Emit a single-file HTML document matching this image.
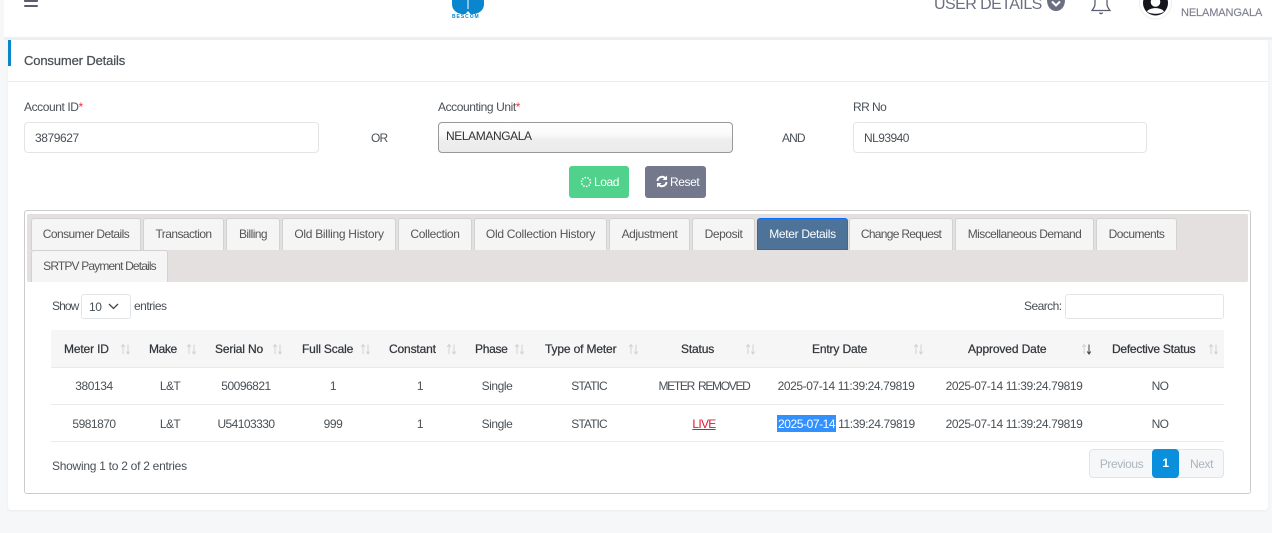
<!DOCTYPE html>
<html><head><meta charset="utf-8"><title>Consumer Details</title>
<style>
html,body{margin:0;padding:0;width:1272px;height:533px;overflow:hidden;background:#f5f7f9;font-family:"Liberation Sans",sans-serif;font-size:12px;color:#495057;letter-spacing:-.42px}
div,span.a,a{position:absolute;box-sizing:border-box;white-space:nowrap}
.t{line-height:16px;height:16px}
.c{text-align:center}
.inp{background:#fff;border:1px solid #e2e5e8;border-radius:4px;height:31px;line-height:30px;padding-left:10px}
.tab{top:218px;height:32px;line-height:31px;text-align:center;background:#f5f5f5;border:1px solid #d2d2d2;border-bottom:0;border-radius:3px 3px 0 0;color:#555;letter-spacing:-.56px}
.th{top:341px;color:#33373d;-webkit-text-stroke:.25px #33373d;letter-spacing:-.15px}
.so{top:342px;width:11px;height:14px}
.r1{top:378px}.r2{top:416px}
</style></head><body>
<div style="left:4px;top:0;width:1268px;height:37px;background:#fff"></div>
<div style="left:4px;top:37px;width:1268px;height:3px;background:#eeeff3"></div>
<div style="left:24px;top:-1px;width:14px;height:3px;background:#5b5e70;border-radius:1px"></div>
<div style="left:24px;top:5px;width:14px;height:2px;background:#5b5e70;border-radius:1px"></div>
<svg style="position:absolute;left:452px;top:0" width="32" height="14" viewBox="0 0 32 14"><path d="M0 0H32V4C32 10 27 14 21 14H11C5 14 0 10 0 4Z" fill="#0a86cf"/><path d="M15.500 0h1v9h-1z" fill="#fff"/><path d="M13.500 14L16 11 18.500 14Z" fill="#fff"/></svg>
<div style="left:452px;top:14px;width:30px;height:6px;line-height:6px;font-size:5px;font-weight:700;color:#0a86cf;letter-spacing:.95px">BESCOM</div>
<div class="t" style="left:934px;top:-4px;height:18px;line-height:18px;font-size:16px;color:#6c6f80;letter-spacing:-.55px">USER DETAILS</div>
<svg style="position:absolute;left:1046px;top:0" width="20" height="11" viewBox="0 0 20 11"><path d="M10 11C15 11 19 7 19 0H1C1 7 5 11 10 11Z" fill="#6c6f80"/><path d="M6 1.500l4 4 4-4" fill="none" stroke="#fff" stroke-width="2"/></svg>
<svg style="position:absolute;left:1090px;top:0" width="22" height="15" viewBox="0 0 22 15"><path d="M5 0V4C5 7 3 9 2 10.500H20C19 9 17 7 17 4V0" fill="none" stroke="#5b5e70" stroke-width="1.300"/><path d="M9.500 12.500C10 14 12 14 12.500 12.500" fill="none" stroke="#5b5e70" stroke-width="1.300"/></svg>
<svg style="position:absolute;left:1138px;top:0" width="36" height="20" viewBox="0 0 36 20"><circle cx="17.500" cy="3" r="16" fill="#fff" stroke="#eee"/><circle cx="17.500" cy="3" r="12.500" fill="#15151c"/><circle cx="17.500" cy="2" r="4.800" fill="#fff"/><path d="M9 11.500C11.500 7 23.500 7 26 11.500C22.500 14.500 12.500 14.500 9 11.500Z" fill="#fff"/></svg>
<div class="t" style="left:1181px;top:5px;font-size:11px;color:#7f8190;letter-spacing:-.12px;-webkit-text-stroke:.15px #7f8190">NELAMANGALA</div>

<div style="left:8px;top:40px;width:1260px;height:470px;background:#fff;border-radius:3px;box-shadow:0 1px 2px rgba(0,0,0,.05)"></div>
<div style="left:8px;top:40px;width:3px;height:26px;background:#0a85c9"></div>
<div style="left:8px;top:81px;width:1260px;height:1px;background:#e9ecef"></div>
<div class="t" style="left:24px;top:53px;font-size:13px;color:#495057;-webkit-text-stroke:.25px #495057;letter-spacing:-.14px">Consumer Details</div>

<div class="t" style="left:24px;top:99px">Account ID<span style="color:#e33">*</span></div>
<div class="t" style="left:438px;top:99px">Accounting Unit<span style="color:#e33">*</span></div>
<div class="t" style="left:853px;top:99px;letter-spacing:-.55px">RR No</div>
<div class="inp" style="left:24px;top:122px;width:295px">3879627</div>
<div class="t" style="left:371px;top:130px;letter-spacing:-.8px">OR</div>
<div style="left:438px;top:122px;width:295px;height:31px;border:1px solid #999;border-radius:4px;line-height:26px;padding-left:7px;background:linear-gradient(#fff 0,#fafafa 40%,#eee 58%,#ebebeb 100%);color:#333;letter-spacing:-.4px">NELAMANGALA</div>
<div class="t" style="left:782px;top:130px;letter-spacing:-.9px">AND</div>
<div class="inp" style="left:853px;top:122px;width:294px;letter-spacing:-.55px">NL93940</div>

<div style="left:569px;top:166px;width:60px;height:32px;background:#51d28c;border-radius:3px"></div>
<svg style="position:absolute;left:580px;top:176px" width="12" height="12" viewBox="0 0 12 12"><circle cx="6" cy="6" r="4.500" fill="none" stroke="#fff" stroke-width="1.500" stroke-dasharray="1.500 1.300"/></svg>
<div class="t" style="left:594px;top:174px;color:#fff">Load</div>
<div style="left:645px;top:166px;width:61px;height:32px;background:#74788d;border-radius:3px"></div>
<svg style="position:absolute;left:656px;top:175px" width="12" height="13" viewBox="0 0 12 13"><path d="M1.500 6A4.500 4.500 0 0 1 9.500 3.500M10.500 7A4.500 4.500 0 0 1 2.500 9.500" fill="none" stroke="#fff" stroke-width="2"/><path d="M11 .5V5H6.500ZM1 12.500V8H5.500Z" fill="#fff"/></svg>
<div class="t" style="left:670px;top:174px;color:#fff">Reset</div>

<div style="left:24px;top:210px;width:1227px;height:284px;border:1px solid #ccc;border-radius:3px"></div>
<div style="left:27px;top:214px;width:1221px;height:68px;background:#e3e0df;border-radius:2px"></div>
<div class="tab" style="left:31px;width:110px">Consumer Details</div>
<div class="tab" style="left:143px;width:81px">Transaction</div>
<div class="tab" style="left:226px;width:54px">Billing</div>
<div class="tab" style="left:282px;width:114px;letter-spacing:-.28px">Old Billing History</div>
<div class="tab" style="left:398px;width:74px;letter-spacing:-.35px">Collection</div>
<div class="tab" style="left:474px;width:133px;letter-spacing:-.28px">Old Collection History</div>
<div class="tab" style="left:609px;width:81px;letter-spacing:-.42px">Adjustment</div>
<div class="tab" style="left:692px;width:63px;letter-spacing:-.42px">Deposit</div>
<div class="tab" style="left:757px;width:91px;background:#4d7399;border:1px solid #0d6efd;color:#fff;letter-spacing:-.32px">Meter Details</div>
<div class="tab" style="left:849px;width:104px;letter-spacing:-.7px">Change Request</div>
<div class="tab" style="left:955px;width:139px">Miscellaneous Demand</div>
<div class="tab" style="left:1096px;width:81px">Documents</div>
<div class="tab" style="left:31px;top:250px;width:137px;letter-spacing:-.85px">SRTPV Payment Details</div>

<div class="t" style="left:52px;top:298px;letter-spacing:-.9px">Show</div>
<div style="left:81px;top:294px;width:50px;height:25px;border:1px solid #e2e5e8;border-radius:3px;line-height:24px;padding-left:7px">10</div>
<svg style="position:absolute;left:108px;top:303px" width="11" height="7" viewBox="0 0 11 7"><path d="M1 1l4.500 4.500L10 1" fill="none" stroke="#444" stroke-width="1.300"/></svg>
<div class="t" style="left:134px;top:298px;letter-spacing:-.5px">entries</div>
<div class="t" style="left:1024px;top:298px;letter-spacing:-.55px">Search:</div>
<div style="left:1065px;top:294px;width:159px;height:25px;border:1px solid #e2e5e8;border-radius:3px"></div>

<div style="left:51px;top:330px;width:1173px;height:38px;background:#f6f6f6;border-bottom:1px solid #e9e9e9"></div>
<div class="t th" style="left:64px">Meter ID</div>
<div class="t th" style="left:149px;letter-spacing:-.4px">Make</div>
<div class="t th" style="left:215px">Serial No</div>
<div class="t th" style="left:302px">Full Scale</div>
<div class="t th" style="left:389px">Constant</div>
<div class="t th" style="left:475px;letter-spacing:-.3px">Phase</div>
<div class="t th" style="left:545px">Type of Meter</div>
<div class="t th" style="left:681px">Status</div>
<div class="t th" style="left:812px">Entry Date</div>
<div class="t th" style="left:968px;letter-spacing:-.12px">Approved Date</div>
<div class="t th" style="left:1112px;letter-spacing:-.25px">Defective Status</div>

<svg width="0" height="0" style="position:absolute"><defs><g id="s"><path d="M3 12V3M1.200 5L3 2.500 4.800 5" fill="none" stroke="#cfd3d8" stroke-width="1"/><path d="M8 2.500V11.500M6.200 9.500L8 12 9.800 9.500" fill="none" stroke="#cfd3d8" stroke-width="1"/></g></defs></svg>
<svg class="so" style="position:absolute;left:120px"><use href="#s"/></svg>
<svg class="so" style="position:absolute;left:186px"><use href="#s"/></svg>
<svg class="so" style="position:absolute;left:272px"><use href="#s"/></svg>
<svg class="so" style="position:absolute;left:360px"><use href="#s"/></svg>
<svg class="so" style="position:absolute;left:446px"><use href="#s"/></svg>
<svg class="so" style="position:absolute;left:514px"><use href="#s"/></svg>
<svg class="so" style="position:absolute;left:628px"><use href="#s"/></svg>
<svg class="so" style="position:absolute;left:745px"><use href="#s"/></svg>
<svg class="so" style="position:absolute;left:913px"><use href="#s"/></svg>
<svg class="so" style="position:absolute;left:1081px"><use href="#s"/><path d="M8 2.500V11.500M6.200 9.500L8 12 9.800 9.500" fill="none" stroke="#444" stroke-width="1"/></svg>
<svg class="so" style="position:absolute;left:1208px"><use href="#s"/></svg>

<div class="t c r1" style="left:54px;width:80px">380134</div>
<div class="t c r1" style="left:140px;width:60px;letter-spacing:-.6px">L&amp;T</div>
<div class="t c r1" style="left:206px;width:80px;letter-spacing:-.5px">50096821</div>
<div class="t c r1" style="left:303px;width:60px">1</div>
<div class="t c r1" style="left:390px;width:60px">1</div>
<div class="t c r1" style="left:467px;width:60px">Single</div>
<div class="t c r1" style="left:559px;width:60px;letter-spacing:-.9px">STATIC</div>
<div class="t c r1" style="left:644px;width:120px;letter-spacing:-1.3px;word-spacing:2px">METER REMOVED</div>
<div class="t c r1" style="left:766px;width:160px">2025-07-14 11:39:24.79819</div>
<div class="t c r1" style="left:934px;width:160px">2025-07-14 11:39:24.79819</div>
<div class="t c r1" style="left:1130px;width:60px;letter-spacing:-.6px">NO</div>
<div style="left:51px;top:404px;width:1173px;height:1px;background:#e9ecef"></div>

<div class="t c r2" style="left:54px;width:80px;letter-spacing:-.5px">5981870</div>
<div class="t c r2" style="left:140px;width:60px;letter-spacing:-.6px">L&amp;T</div>
<div class="t c r2" style="left:206px;width:80px;letter-spacing:-.55px">U54103330</div>
<div class="t c r2" style="left:303px;width:60px">999</div>
<div class="t c r2" style="left:390px;width:60px">1</div>
<div class="t c r2" style="left:467px;width:60px">Single</div>
<div class="t c r2" style="left:559px;width:60px;letter-spacing:-.9px">STATIC</div>
<div class="t c r2" style="left:674px;width:60px;color:#e8112d;text-decoration:underline;letter-spacing:-.7px">LIVE</div>
<div style="left:777px;top:415px;width:59px;height:17px;background:#3390ff"></div>
<div class="t r2" style="left:778px"><span style="color:#fff">2025-07-14</span> 11:39:24.79819</div>
<div class="t c r2" style="left:934px;width:160px">2025-07-14 11:39:24.79819</div>
<div class="t c r2" style="left:1130px;width:60px;letter-spacing:-.6px">NO</div>
<div style="left:51px;top:441px;width:1173px;height:1px;background:#e9ecef"></div>

<div class="t" style="left:52px;top:458px;letter-spacing:-.27px">Showing 1 to 2 of 2 entries</div>
<div style="left:1089px;top:449px;width:135px;height:29px;background:#f6f7f8;border:1px solid #e2e5e8;border-radius:4px"></div>
<div class="t c" style="left:1089px;top:456px;width:65px;color:#adb5bd">Previous</div>
<div class="c" style="left:1152px;top:449px;width:27px;height:29px;line-height:29px;background:#0a8fdc;color:#fff;border-radius:4px;font-weight:700">1</div>
<div class="t c" style="left:1179px;top:456px;width:45px;color:#adb5bd">Next</div>
</body></html>
